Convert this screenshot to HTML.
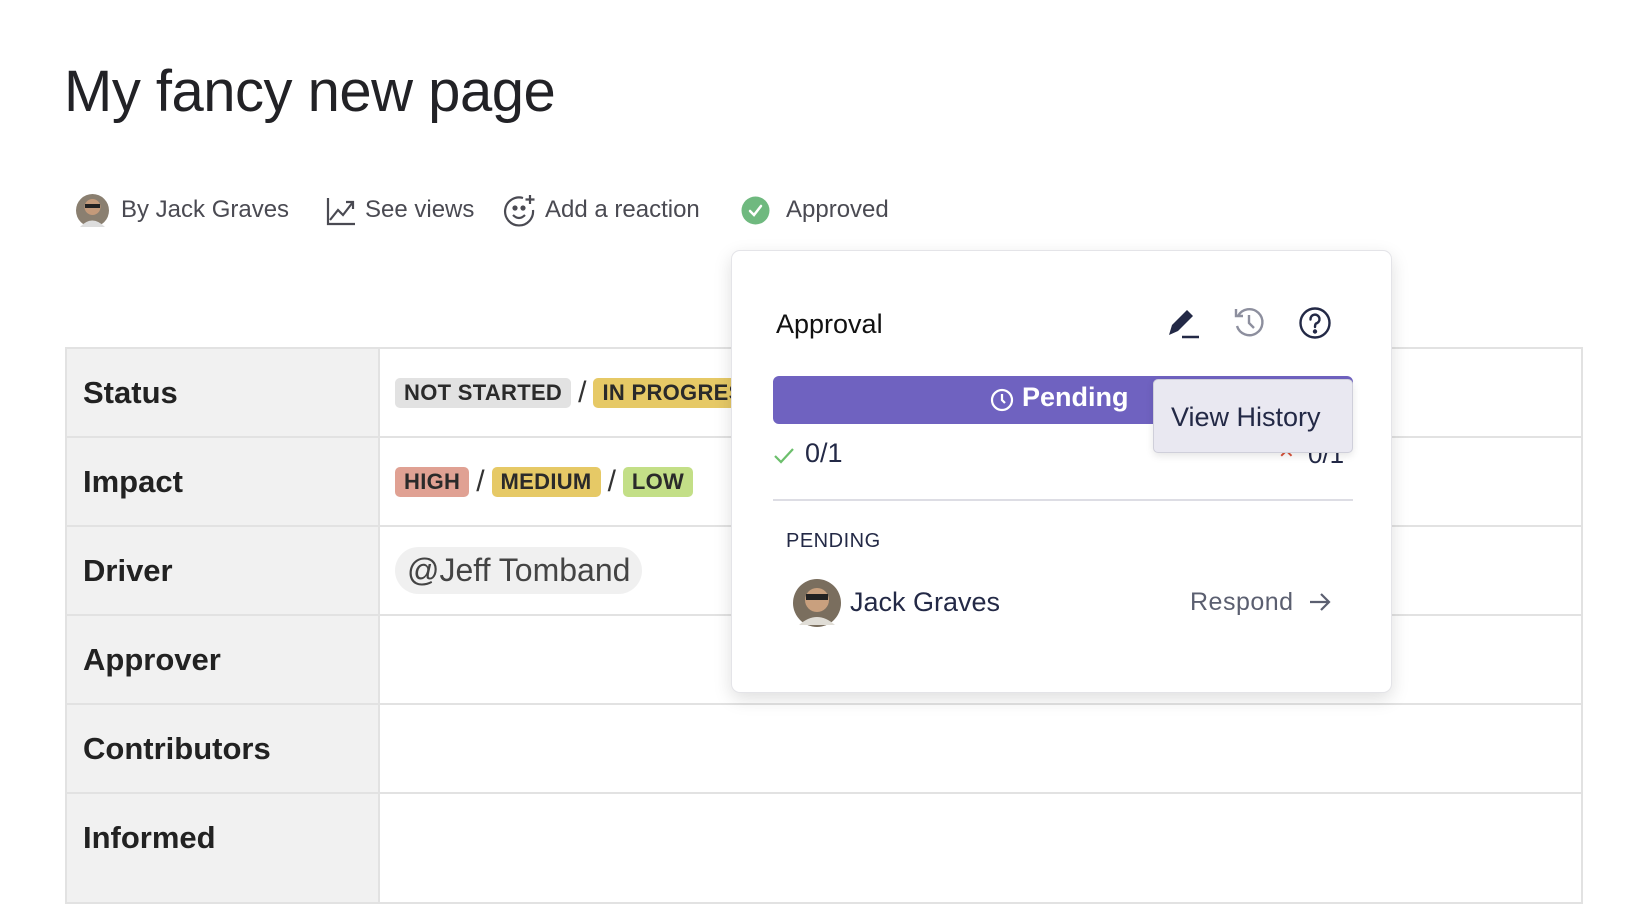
<!DOCTYPE html>
<html><head><meta charset="utf-8"><style>
*{box-sizing:border-box;margin:0;padding:0}
body{width:1630px;height:856px;overflow:hidden;background:#fff;font-family:"Liberation Sans",sans-serif;color:#2b2b30;position:relative}
.abs{position:absolute}
h1{position:absolute;left:64px;top:58px;font-size:58px;font-weight:400;color:#222226;letter-spacing:-0.5px}
.meta{position:absolute;top:196px;font-size:24px;color:#4a4a52;white-space:nowrap}
table{position:absolute;left:65px;top:347px;border-collapse:collapse}
td{border:2px solid #e2e2e2;height:89px;vertical-align:middle}
td.k{width:313px;background:#f1f1f1;font-weight:700;font-size:31px;padding-left:16px;color:#222}
td.v{padding-left:15px;font-size:22px}
.tag{display:inline-block;padding:2px 9px;border-radius:5px;font-weight:700;font-size:22px;color:#2a2a2a;vertical-align:middle;letter-spacing:.3px}
.sl{font-size:30px;margin:0 7px;vertical-align:middle;color:#333}
.pop{position:absolute;left:731px;top:250px;width:661px;height:443px;background:#fff;border:1px solid #e4e4e8;border-radius:9px;box-shadow:0 6px 18px rgba(0,0,0,.13)}
</style></head><body>
<h1>My fancy new page</h1>
<svg class="abs" style="left:76px;top:194px" width="33" height="33"><circle cx="16.5" cy="16.5" r="16.5" fill="#8a7f70"/><circle cx="16.5" cy="13" r="8" fill="#c49a7a"/><rect x="9" y="10" width="15" height="4" fill="#222"/><path d="M4 33 Q16 20 29 33Z" fill="#ddd"/></svg>
<div class="meta" style="left:121px">By Jack Graves</div>
<svg class="abs" style="left:326px;top:196px" width="30" height="30" fill="none" stroke="#4a4a52" stroke-width="2.2"><path d="M2 2V28H29"/><path d="M4 24L12 14L17 19L27 6"/><path d="M20 6H27V13"/></svg>
<div class="meta" style="left:365px">See views</div>
<svg class="abs" style="left:503px;top:194px" width="34" height="34" fill="none" stroke="#4a4a52" stroke-width="2.2"><path d="M20 4A14 14 0 1 0 30 16"/><circle cx="12" cy="14" r="1.5" fill="#4a4a52"/><circle cx="20" cy="14" r="1.5" fill="#4a4a52"/><path d="M10 21Q16 27 22 21"/><path d="M27 1V10M22.5 5.5H31.5"/></svg>
<div class="meta" style="left:545px">Add a reaction</div>
<svg class="abs" style="left:741px;top:196px" width="29" height="29"><circle cx="14.5" cy="14.5" r="14" fill="#6fb97f"/><path d="M9 15L13 19L20 10" fill="none" stroke="#fff" stroke-width="2.5" stroke-linecap="round"/></svg>
<div class="meta" style="left:786px">Approved</div>

<table style="width:1518px">
<tr><td class="k">Status</td><td class="v"><span class="tag" style="background:#e2e2e2">NOT STARTED</span><span class="sl">/</span><span class="tag" style="background:#e6c966">IN PROGRESS</span></td></tr>
<tr><td class="k">Impact</td><td class="v"><span class="tag" style="background:#e0a193">HIGH</span><span class="sl">/</span><span class="tag" style="background:#e6c966">MEDIUM</span><span class="sl">/</span><span class="tag" style="background:#c3df87">LOW</span></td></tr>
<tr><td class="k">Driver</td><td class="v"><span style="display:inline-block;background:#f0f0f0;border-radius:24px;padding:5px 12px;font-size:32px;color:#444">@Jeff Tomband</span></td></tr>
<tr><td class="k">Approver</td><td class="v"></td></tr>
<tr><td class="k">Contributors</td><td class="v"></td></tr>
<tr><td class="k" style="height:110px;vertical-align:top;padding-top:26px">Informed</td><td class="v"></td></tr>
</table>

<div class="pop">
<div class="abs" style="left:44px;top:58px;font-size:27px;color:#111">Approval</div>
<svg class="abs" style="left:433px;top:54px" width="36" height="36"><path d="M4 30L7 20L22 5L28 11L13 26Z" fill="#232946"/><path d="M17 32H34" stroke="#232946" stroke-width="2.5"/></svg>
<svg class="abs" style="left:500px;top:55px" width="34" height="34" fill="none" stroke="#8d8f9e" stroke-width="2.4"><path d="M6 10A13 13 0 1 1 5 20"/><path d="M4 3V10H11"/><path d="M17 9V17L22 22"/></svg>
<svg class="abs" style="left:566px;top:55px" width="34" height="34" fill="none" stroke="#232946" stroke-width="2.4"><circle cx="17" cy="17" r="14.5"/><path d="M12.5 13.5A4.5 4.5 0 1 1 18 17.5Q17 18.5 17 21" stroke-linecap="round"/><circle cx="17" cy="25.5" r="1" fill="#232946"/></svg>
<div class="abs" style="left:41px;top:125px;width:580px;height:48px;background:#6f62c0;border-radius:6px"></div>
<svg class="abs" style="left:258px;top:137px" width="24" height="24" fill="none" stroke="#fff" stroke-width="2.2"><circle cx="12" cy="12" r="10"/><path d="M12 6V12L15 15"/></svg>
<div class="abs" style="left:290px;top:131px;font-size:27px;font-weight:700;color:#fff">Pending</div>
<div class="abs" style="left:576px;top:188px;font-size:26px;color:#232946">0/1</div>
<div class="abs" style="left:546px;top:188px;font-size:20px;color:#d9533b">✕</div>
<svg class="abs" style="left:41px;top:193px" width="24" height="24" fill="none" stroke="#6cbf6c" stroke-width="2.2"><path d="M2 12L8 18L20 5"/></svg>
<div class="abs" style="left:73px;top:187px;font-size:27px;color:#232946">0/1</div>
<div class="abs" style="left:421px;top:128px;width:200px;height:74px;background:#e9e8f1;border:1px solid #cfcfda;border-radius:5px;box-shadow:0 3px 8px rgba(0,0,0,.1);font-size:27px;color:#232946;padding:22px 0 0 17px">View History</div>
<div class="abs" style="left:41px;top:248px;width:580px;height:2px;background:#dddde4"></div>
<div class="abs" style="left:54px;top:279px;font-size:20px;color:#232946;letter-spacing:.5px">PENDING</div>
<svg class="abs" style="left:61px;top:328px" width="48" height="48"><circle cx="24" cy="24" r="24" fill="#7a6e5e"/><circle cx="24" cy="21" r="12" fill="#c9a07e"/><rect x="13" y="15" width="22" height="6" fill="#222"/><path d="M6 46Q24 30 42 46Z" fill="#e0ddd6"/></svg>
<div class="abs" style="left:118px;top:336px;font-size:27px;color:#232946">Jack Graves</div>
<div class="abs" style="left:458px;top:337px;font-size:25px;color:#5b5f70;letter-spacing:.5px">Respond</div>
<svg class="abs" style="left:576px;top:339px" width="24" height="24" fill="none" stroke="#5b5f70" stroke-width="2.2"><path d="M2 12H21M13 4L21 12L13 20"/></svg>
</div>
</body></html>
